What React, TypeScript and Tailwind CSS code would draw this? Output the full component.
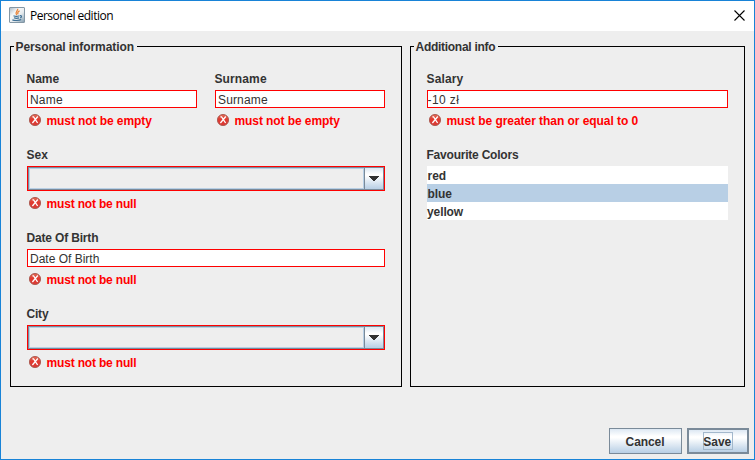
import type { ReactNode } from "react";

function JavaIcon() {
  return (
    <svg width="16" height="16" viewBox="0 0 16 16" className="mb-[2px] shrink-0">
      <defs>
        <linearGradient id="java-bg" x1="0" y1="0" x2="1" y2="1">
          <stop offset="0" stopColor="#a9b8c3" />
          <stop offset="0.35" stopColor="#f6f8f9" />
          <stop offset="0.6" stopColor="#e6ebee" />
          <stop offset="1" stopColor="#7f9bae" />
        </linearGradient>
      </defs>
      <rect x="0.5" y="0.5" width="15" height="15" rx="0.5" fill="url(#java-bg)" stroke="#8497a5" />
      <path d="M8.8 1.8C9 4 5.6 4.6 7.6 8M10.6 3.8C8.2 5 8.4 6 8.9 7.4" fill="none" stroke="#ea8438" strokeWidth="1.2" />
      <path d="M4.5 8.8c1.5.6 4.2.6 6 0M5 10.8c1.4.6 3.7.5 5 .1M3.4 12.9c2 .9 7 .8 8.8-.3M11 8.7c2-.4 1.8 1.5.2 2.2" fill="none" stroke="#3f7095" strokeWidth="1.2" />
    </svg>
  );
}

function ErrorIcon() {
  return (
    <svg width="12" height="12" viewBox="0 0 12 12" className="mt-px ml-[2px] shrink-0">
      <defs>
        <linearGradient id="error-bg" x1="0" y1="0" x2="0" y2="1">
          <stop offset="0" stopColor="#df6a55" />
          <stop offset="0.45" stopColor="#e23a30" />
          <stop offset="1" stopColor="#d83a36" />
        </linearGradient>
      </defs>
      <circle cx="6" cy="6" r="5.6" fill="url(#error-bg)" stroke="#a9584f" strokeWidth="0.9" />
      <path d="M3.4 2.8h1.2l4 6.2M8.8 2.5L3.4 9" fill="none" stroke="#fff" strokeWidth="1.3" />
    </svg>
  );
}

function ErrorText({ children, tracking }: { children: string; tracking: string }) {
  return (
    <div className="mt-[5px] flex h-4 gap-[5.5px] text-[#ff0000]">
      <ErrorIcon />
      <span className={tracking}>{children}</span>
    </div>
  );
}

interface FieldProps {
  label: string;
  tracking?: string;
  className?: string;
  children: ReactNode;
}

function Field({ label, tracking = "", className = "", children }: FieldProps) {
  return (
    <div className={`flex flex-col ${className}`}>
      <span className={`mb-[3px] -ml-[0.5px] h-4 ${tracking}`}>{label}</span>
      {children}
    </div>
  );
}

function TextBox({ value, className = "pl-[2px]" }: { value: string; className?: string }) {
  return (
    <div className={`h-[18px] border border-[#ff0000] bg-white pt-px leading-4 font-normal ${className}`}>
      {value}
    </div>
  );
}

function Combo() {
  return (
    <div className="flex h-[25px] border border-[#ff0000]">
      <div className="flex flex-1 border border-[#7a8a99]">
        <div className="flex-1 border border-[#b8cfe5]" />
        <div className="flex w-[19px] items-center justify-center border-l border-[#7a8a99] bg-[linear-gradient(#dde8f3_0%,#ffffff_30%,#ffffff_36%,#b8cfe5_100%)]">
          <svg width="10" height="5" viewBox="0 0 10 5" shapeRendering="crispEdges">
            <path d="M0 0h10v1H9v1H8v1H7v1H6v1H4V4H3V3H2V2H1V1H0z" fill="#333" />
          </svg>
        </div>
      </div>
    </div>
  );
}

function Panel({ title, legend, className, children }: { title: string; legend: string; className: string; children: ReactNode }) {
  return (
    <section className={`relative flex h-[341px] flex-col gap-[18px] border border-black px-4 pt-6 ${className}`}>
      <h2 className={`absolute -top-2 left-[3px] h-4 bg-[#eeeeee] pl-[1.5px] whitespace-nowrap ${legend}`}>{title}</h2>
      {children}
    </section>
  );
}

export default function App() {
  return (
    <div className="flex h-[460px] w-[755px] flex-col overflow-hidden border border-[#1883d7] bg-[#eeeeee] font-['Liberation_Sans',Arial,sans-serif] text-xs leading-4 font-bold text-[#333333]">
      <header className="flex h-[30px] shrink-0 items-center bg-white pr-[9px] pl-2 font-['Open_Sans','Noto_Sans',sans-serif] font-normal text-black">
        <JavaIcon />
        <span className="ml-[5px] flex-1 text-xs tracking-[-0.5px]">Personel edition</span>
        <svg width="11" height="11" viewBox="0 0 11 11" className="mb-px">
          <path d="M.5.5l10 10M10.5.5l-10 10" stroke="#000" strokeWidth="1.1" />
        </svg>
      </header>
      <main className="mt-[15px] ml-[9px] flex gap-2">
        <Panel title="Personal information" legend="w-[123px] tracking-[-0.08px]" className="w-[392px]">
          <div className="flex gap-[18px]">
            <Field label="Name" className="w-[170px]">
              <TextBox value="Name" className="pl-[2px] tracking-[0.2px]" />
              <ErrorText tracking="tracking-[-0.08px]">must not be empty</ErrorText>
            </Field>
            <Field label="Surname" tracking="tracking-[0.12px]" className="w-[170px]">
              <TextBox value="Surname" className="pl-[2px] tracking-[0.15px]" />
              <ErrorText tracking="tracking-[-0.08px]">must not be empty</ErrorText>
            </Field>
          </div>
          <Field label="Sex">
            <Combo />
            <ErrorText tracking="tracking-[-0.17px]">must not be null</ErrorText>
          </Field>
          <Field label="Date Of Birth" tracking="tracking-[-0.17px]">
            <TextBox value="Date Of Birth" />
            <ErrorText tracking="tracking-[-0.17px]">must not be null</ErrorText>
          </Field>
          <Field label="City" tracking="tracking-[-0.2px]">
            <Combo />
            <ErrorText tracking="tracking-[-0.17px]">must not be null</ErrorText>
          </Field>
        </Panel>
        <Panel title="Additional info" legend="w-[84px] tracking-[-0.28px]" className="w-[335px]">
          <Field label="Salary" tracking="tracking-[0.15px]">
            <TextBox value="-10 zł" className="-indent-[0.5px] tracking-[0.4px]" />
            <ErrorText tracking="tracking-[-0.05px]">must be greater than or equal to 0</ErrorText>
          </Field>
          <Field label="Favourite Colors" tracking="tracking-[-0.22px]">
            <ul className="pl-0">
              <li className="h-[18px] bg-white pt-[2px] pl-[0.5px]">red</li>
              <li className="h-[18px] bg-[#b8cfe5] pt-[2px] pl-[0.5px] tracking-[-0.1px]">blue</li>
              <li className="h-[18px] bg-white pt-[2px] tracking-[-0.1px]">yellow</li>
            </ul>
          </Field>
        </Panel>
      </main>
      <footer className="mt-[41px] mr-[5px] flex justify-end gap-[5px]">
        <button className="flex h-[26px] w-[73px] items-center justify-center border border-[#7a8a99] bg-[linear-gradient(#dde8f3_0%,#ffffff_30%,#ffffff_36%,#b8cfe5_100%)] pt-px pr-px tracking-[-0.1px]">
          Cancel
        </button>
        <button className="flex h-[26px] w-[62px] items-center justify-center border-2 border-[#7a8a99] bg-[linear-gradient(#dde8f3_0%,#ffffff_30%,#ffffff_36%,#b8cfe5_100%)]">
          <span className="flex h-[18px] w-[30px] items-center justify-center border border-[#a3b8cc] pt-px pr-[1.5px]">Save</span>
        </button>
      </footer>
    </div>
  );
}
